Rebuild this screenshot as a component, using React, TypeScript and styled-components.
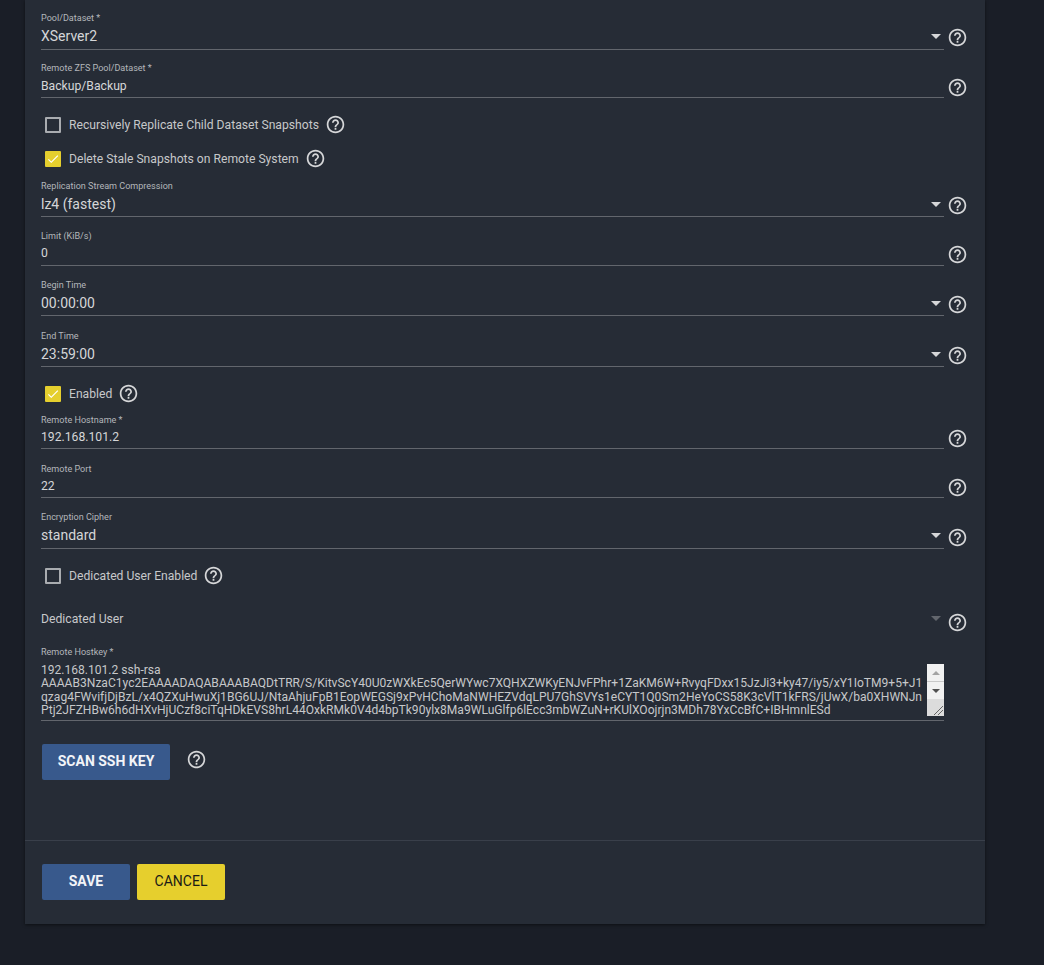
import React from "react";
import styled, { createGlobalStyle } from "styled-components";
import { MdHelpOutline, MdCheck } from "react-icons/md";

const GlobalStyle = createGlobalStyle`
    html, body {
        margin: 0;
        height: 965px;
        overflow: hidden;
        background-color: #1a1e27;
        font-family: Roboto, "Liberation Sans", sans-serif;
    }
`;

const Page = styled.div`
    padding: 0 59px 0 25px;
`;

const Card = styled.div`
    height: 924px;
    background-color: #262c36;
    box-shadow: 0 1px 3px rgba(0, 0, 0, 0.5);
    display: flex;
    flex-direction: column;
`;

const Form = styled.div`
    flex: 1;
    padding: 0 16px;
    display: flex;
    flex-direction: column;
`;

const Row = styled.div<{ $top: number }>`
    display: flex;
    align-items: flex-end;
    margin-top: ${(p) => p.$top}px;
`;

const Field = styled.div`
    width: 903px;
`;

const Label = styled.div`
    font-size: 9.05px;
    line-height: 10px;
    padding-bottom: 2px;
    color: #b4b7bb;
`;

const Value = styled.div<{ $height: number; $pad?: number; $input?: boolean }>`
    display: flex;
    align-items: center;
    justify-content: space-between;
    height: ${(p) => p.$height}px;
    padding-bottom: ${(p) => p.$pad ?? 0}px;
    border-bottom: 1px solid #62666d;
    font-size: ${(p) => (p.$input ? 12.2 : 14)}px;
    color: #d5d6d8;
`;

const Arrow = styled.span<{ $muted?: boolean }>`
    width: 0;
    height: 0;
    margin-right: 3px;
    border-left: 5px solid transparent;
    border-right: 5px solid transparent;
    border-top: 5px solid ${(p) => (p.$muted ? "#62666d" : "#d5d6d8")};
`;

const Help = styled(MdHelpOutline)<{ $lift: number }>`
    display: block;
    flex: none;
    font-size: 21px;
    margin-left: 3px;
    margin-bottom: ${(p) => p.$lift}px;
    color: #d5d6d8;
`;

const CheckRow = styled.div<{ $top: number }>`
    display: flex;
    align-items: center;
    height: 21px;
    margin-top: ${(p) => p.$top}px;
    padding-left: 4px;
    font-size: 12.15px;
    color: #c6c8ca;
`;

const Box = styled.span<{ $checked?: boolean }>`
    display: flex;
    align-items: center;
    justify-content: center;
    box-sizing: border-box;
    width: 16px;
    height: 16px;
    margin-right: 8px;
    border-radius: 1px;
    color: #fff;
    font-size: 14px;
    background-color: ${(p) => (p.$checked ? "#e5cf2e" : "transparent")};
    border: ${(p) => (p.$checked ? "none" : "2px solid #a9acb0")};
`;

const InlineHelp = styled(MdHelpOutline)`
    font-size: 21px;
    margin-left: 6px;
    color: #d5d6d8;
`;

const PlainValue = styled.div`
    width: 903px;
    height: 19px;
    padding-bottom: 5px;
    display: flex;
    align-items: center;
    justify-content: space-between;
    font-size: 12.2px;
    color: #c6c8ca;
`;

const KeyWrap = styled.div`
    position: relative;
    height: 61px;
    border-bottom: 1px solid #62666d;
`;

const KeyText = styled.div`
    padding-top: 5px;
    font-size: 12.07px;
    line-height: 13.33px;
    color: #c6c8ca;
    white-space: pre;
`;

const Scrollbar = styled.div`
    position: absolute;
    top: 5px;
    right: 0;
    width: 17px;
    height: 52px;
    background-color: #f1f1f1;
    display: flex;
    flex-direction: column;
`;

const ScrollTrack = styled.div`
    height: 35px;
    display: flex;
    flex-direction: column;
    align-items: center;
`;

const ScrollUp = styled.span`
    margin-top: 7px;
    width: 0;
    height: 0;
    border-left: 4px solid transparent;
    border-right: 4px solid transparent;
    border-bottom: 4px solid #a3a3a3;
`;

const ScrollLine = styled.span`
    width: 100%;
    height: 1px;
    margin-top: 6px;
    background-color: #c8c8c8;
`;

const ScrollDown = styled.span`
    margin-top: 7px;
    width: 0;
    height: 0;
    border-left: 4px solid transparent;
    border-right: 4px solid transparent;
    border-top: 4px solid #505050;
`;

const ResizeGrip = styled.svg`
    flex: 1;
    background-color: #dcdcdc;
`;

const ScanRow = styled.div`
    display: flex;
    align-items: center;
    margin-top: 23px;
    padding-left: 1px;
`;

const Button = styled.button<{ $kind: "primary" | "accent"; $width: number }>`
    width: ${(p) => p.$width}px;
    height: 36px;
    padding: 0 0 2px;
    border: none;
    border-radius: 2px;
    font-family: inherit;
    font-size: 14px;
    font-weight: ${(p) => (p.$kind === "primary" ? 700 : 400)};
    color: ${(p) => (p.$kind === "primary" ? "#f2f4f8" : "#1a1a16")};
    background-color: ${(p) => (p.$kind === "primary" ? "#38598c" : "#e6cf2d")};
`;

const ScanHelp = styled(MdHelpOutline)`
    font-size: 21px;
    margin-left: 16px;
    margin-top: -6px;
    color: #d5d6d8;
`;

const Footer = styled.div`
    box-sizing: border-box;
    height: 84px;
    border-top: 1px solid #393f4a;
    padding: 23px 17px 0;
    display: flex;
    gap: 7px;
    align-items: flex-start;
`;

const App: React.FC = () => {
    return (
        <>
            <GlobalStyle />
            <Page>
                <Card>
                    <Form>
                        <Row $top={13}>
                            <Field>
                                <Label>Pool/Dataset *</Label>
                                <Value $height={22} $pad={2}>
                                    XServer2
                                    <Arrow />
                                </Value>
                            </Field>
                            <Help $lift={2} />
                        </Row>
                        <Row $top={13}>
                            <Field>
                                <Label>Remote ZFS Pool/Dataset *</Label>
                                <Value $height={22} $input>Backup/Backup</Value>
                            </Field>
                            <Help $lift={0} />
                        </Row>
                        <CheckRow $top={16}>
                            <Box />
                            Recursively Replicate Child Dataset Snapshots
                            <InlineHelp />
                        </CheckRow>
                        <CheckRow $top={13}>
                            <Box $checked>
                                <MdCheck />
                            </Box>
                            Delete Stale Snapshots on Remote System
                            <InlineHelp />
                        </CheckRow>
                        <Row $top={12}>
                            <Field>
                                <Label>Replication Stream Compression</Label>
                                <Value $height={22} $pad={1}>
                                    lz4 (fastest)
                                    <Arrow />
                                </Value>
                            </Field>
                            <Help $lift={1} />
                        </Row>
                        <Row $top={14}>
                            <Field>
                                <Label>Limit (KiB/s)</Label>
                                <Value $height={20} $pad={2} $input>0</Value>
                            </Field>
                            <Help $lift={1} />
                        </Row>
                        <Row $top={14}>
                            <Field>
                                <Label>Begin Time</Label>
                                <Value $height={22} $pad={1}>
                                    00:00:00
                                    <Arrow />
                                </Value>
                            </Field>
                            <Help $lift={1} />
                        </Row>
                        <Row $top={15}>
                            <Field>
                                <Label>End Time</Label>
                                <Value $height={22} $pad={1}>
                                    23:59:00
                                    <Arrow />
                                </Value>
                            </Field>
                            <Help $lift={1} />
                        </Row>
                        <CheckRow $top={16}>
                            <Box $checked>
                                <MdCheck />
                            </Box>
                            Enabled
                            <InlineHelp />
                        </CheckRow>
                        <Row $top={11}>
                            <Field>
                                <Label>Remote Hostname *</Label>
                                <Value $height={20} $pad={1} $input>192.168.101.2</Value>
                            </Field>
                            <Help $lift={0} />
                        </Row>
                        <Row $top={15}>
                            <Field>
                                <Label>Remote Port</Label>
                                <Value $height={20} $pad={1} $input>22</Value>
                            </Field>
                            <Help $lift={0} />
                        </Row>
                        <Row $top={14}>
                            <Field>
                                <Label>Encryption Cipher</Label>
                                <Value $height={22} $pad={2}>
                                    standard
                                    <Arrow />
                                </Value>
                            </Field>
                            <Help $lift={1} />
                        </Row>
                        <CheckRow $top={16}>
                            <Box />
                            Dedicated User Enabled
                            <InlineHelp />
                        </CheckRow>
                        <Row $top={23}>
                            <PlainValue>
                                Dedicated User
                                <Arrow $muted />
                            </PlainValue>
                            <Help $lift={0} />
                        </Row>
                        <Row $top={14}>
                            <Field>
                                <Label>Remote Hostkey *</Label>
                                <KeyWrap>
                                    <KeyText>
                                        {`192.168.101.2 ssh-rsa
AAAAB3NzaC1yc2EAAAADAQABAAABAQDtTRR/S/KitvScY40U0zWXkEc5QerWYwc7XQHXZWKyENJvFPhr+1ZaKM6W+RvyqFDxx15JzJi3+ky47/iy5/xY1IoTM9+5+J1
qzag4FWvifjDjBzL/x4QZXuHwuXj1BG6UJ/NtaAhjuFpB1EopWEGSj9xPvHChoMaNWHEZVdqLPU7GhSVYs1eCYT1Q0Sm2HeYoCS58K3cVlT1kFRS/jUwX/ba0XHWNJn
Ptj2JFZHBw6h6dHXvHjUCzf8ciTqHDkEVS8hrL44OxkRMk0V4d4bpTk90ylx8Ma9WLuGlfp6lEcc3mbWZuN+rKUlXOojrjn3MDh78YxCcBfC+IBHmnlESd`}
                                    </KeyText>
                                    <Scrollbar>
                                        <ScrollTrack>
                                            <ScrollUp />
                                            <ScrollLine />
                                            <ScrollDown />
                                        </ScrollTrack>
                                        <ResizeGrip viewBox="0 0 17 17">
                                            <path d="M7 16 L16 7 M11 16 L16 11" stroke="#666" fill="none" />
                                        </ResizeGrip>
                                    </Scrollbar>
                                </KeyWrap>
                            </Field>
                        </Row>
                        <ScanRow>
                            <Button $kind="primary" $width={128}>SCAN SSH KEY</Button>
                            <ScanHelp />
                        </ScanRow>
                    </Form>
                    <Footer>
                        <Button $kind="primary" $width={88}>SAVE</Button>
                        <Button $kind="accent" $width={88}>CANCEL</Button>
                    </Footer>
                </Card>
            </Page>
        </>
    );
};

export default App;
